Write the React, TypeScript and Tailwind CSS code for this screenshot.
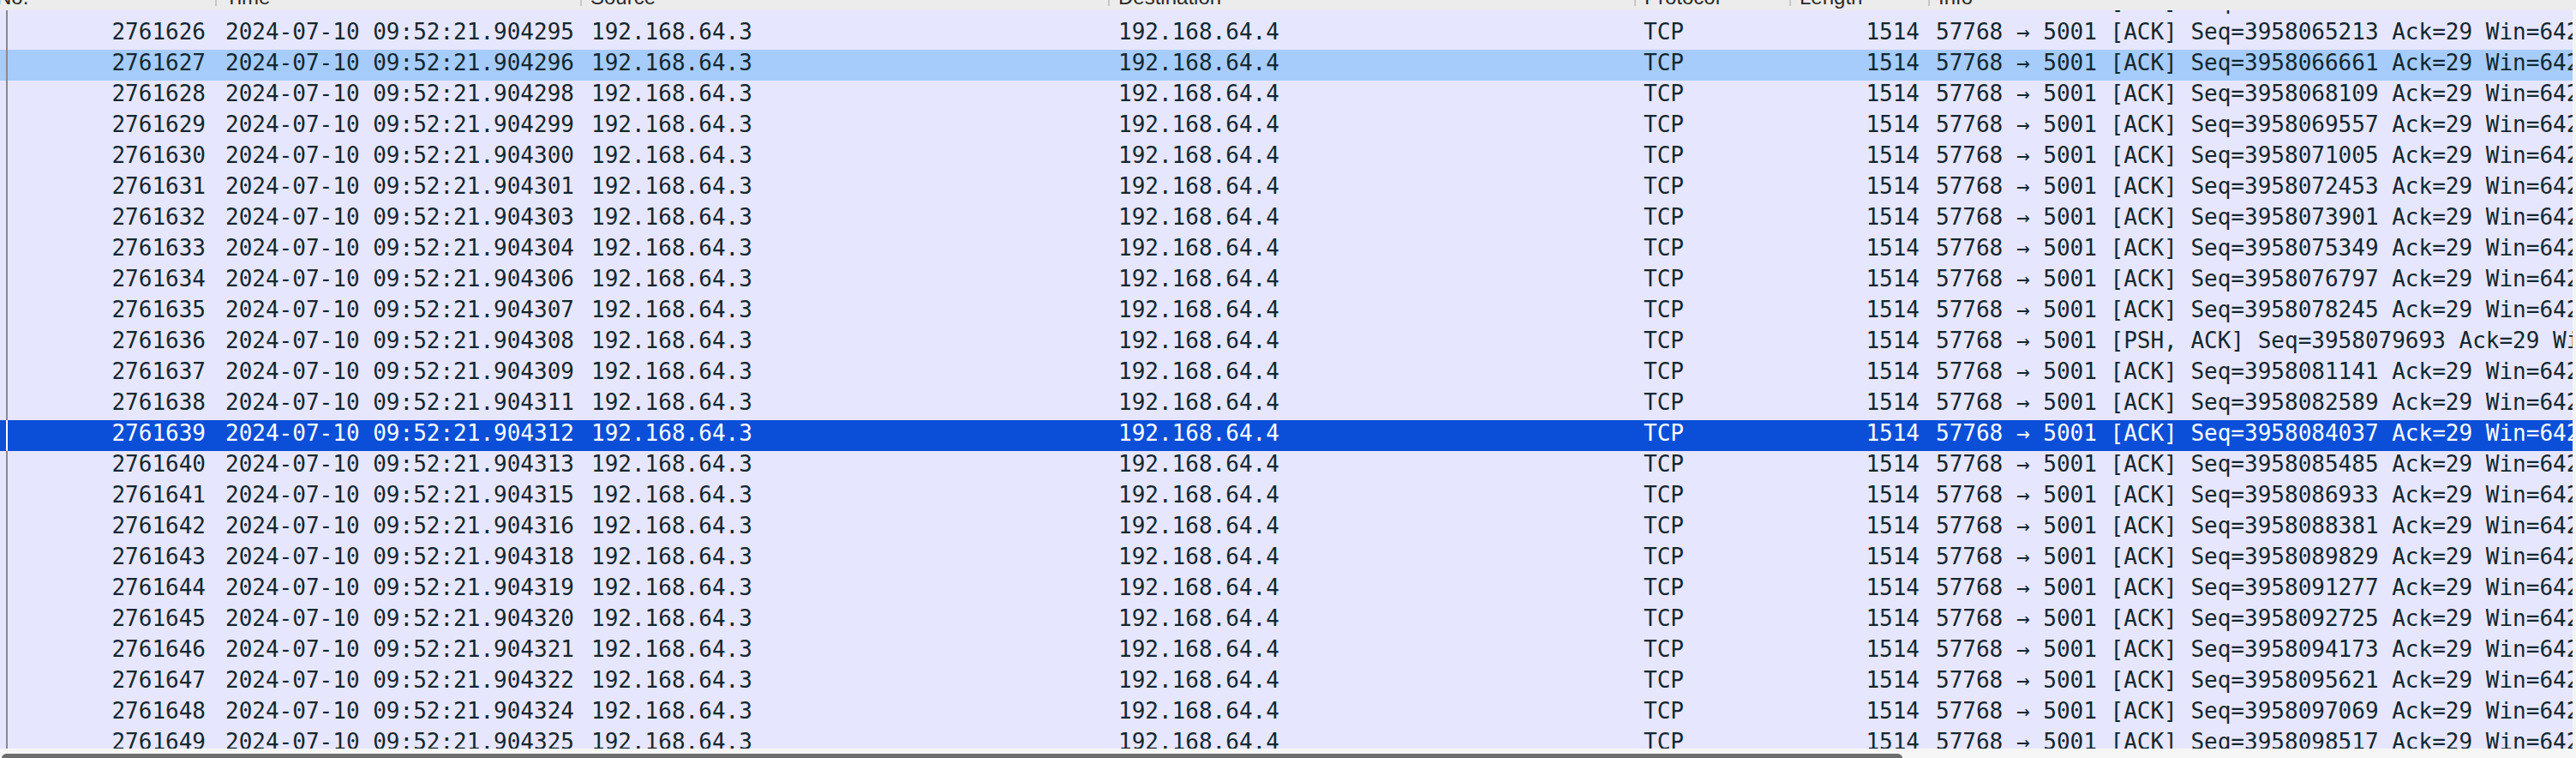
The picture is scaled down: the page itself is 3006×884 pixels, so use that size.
const times: Record<number, string> = {
  2761625: "904294",
  2761626: "904295",
  2761627: "904296",
  2761628: "904298",
  2761629: "904299",
  2761630: "904300",
  2761631: "904301",
  2761632: "904303",
  2761633: "904304",
  2761634: "904306",
  2761635: "904307",
  2761636: "904308",
  2761637: "904309",
  2761638: "904311",
  2761639: "904312",
  2761640: "904313",
  2761641: "904315",
  2761642: "904316",
  2761643: "904318",
  2761644: "904319",
  2761645: "904320",
  2761646: "904321",
  2761647: "904322",
  2761648: "904324",
  2761649: "904325",
}

const packets = Object.keys(times).map((key) => {
  const no = Number(key)
  const seq = 3958065213 + (no - 2761626) * 1448
  const flags = no === 2761636 ? "[PSH, ACK]" : "[ACK]"
  return {
    no,
    time: `2024-07-10 09:52:21.${times[no]}`,
    info: `57768 → 5001 ${flags} Seq=${seq} Ack=29 Win=64256 Len=1448 TSval=2263517081 TSecr=1399226573`,
  }
})

function HeaderCell({ label, width, first }: { label: string; width: string; first?: boolean }) {
  return (
    <div className={`flex shrink-0 ${width}`}>
      {!first && <div className="h-[7px] w-[2px] shrink-0 bg-[#c6c6c6]" />}
      <span className={`mt-[-15px] leading-[24px] whitespace-nowrap ${first ? "ml-[-4px]" : "ml-[10px]"}`}>
        {label}
      </span>
    </div>
  )
}

function Row({ p }: { p: (typeof packets)[number] }) {
  const selected = p.no === 2761639
  const related = p.no === 2761627
  const rowColor = selected
    ? "bg-[#0b4fd8] text-white"
    : related
      ? "bg-[#a6ccfc] text-[#12272e]"
      : "bg-[#e7e6ff] text-[#12272e]"

  return (
    <div className={`flex h-[36px] shrink-0 leading-[30px] whitespace-nowrap ${rowColor}`}>
      {/* No. + related-packet line */}
      <div className="flex w-[251px] shrink-0 pl-[7px]">
        <div className={`w-[2px] shrink-0 ${selected ? "bg-white" : "bg-[#8a8a8e]"}`} />
        <span className="flex-1 pr-[11px] text-right">{p.no}</span>
      </div>
      <div className="w-[426px] shrink-0 overflow-hidden pl-[12px]">{p.time}</div>
      <div className="w-[616px] shrink-0 overflow-hidden pl-[13px]">192.168.64.3</div>
      <div className="w-[614px] shrink-0 overflow-hidden pl-[12px]">192.168.64.4</div>
      <div className="w-[181px] shrink-0 overflow-hidden pl-[11px]">TCP</div>
      <div className="w-[162px] shrink-0 overflow-hidden pr-[10px] text-right">1514</div>
      <div className="w-[752px] shrink-0 overflow-hidden pl-[9px]">{p.info}</div>
    </div>
  )
}

export default function App() {
  return (
    <div className="flex h-[884px] w-[3006px] flex-col overflow-hidden bg-[#e7e6ff]">
      {/* Column header, scrolled so only the bottom of the labels shows */}
      <div className="flex h-[12px] shrink-0 overflow-hidden bg-[#ececec] font-['Liberation_Sans',sans-serif] text-[24px] text-[#2a2a2a]">
        <HeaderCell label="No." width="w-[251px]" first />
        <HeaderCell label="Time" width="w-[426px]" />
        <HeaderCell label="Source" width="w-[616px]" />
        <HeaderCell label="Destination" width="w-[614px]" />
        <HeaderCell label="Protocol" width="w-[181px]" />
        <HeaderCell label="Length" width="w-[162px]" />
        <HeaderCell label="Info" width="w-[752px]" />
      </div>

      {/* Packet list */}
      <div className="flex min-h-0 flex-1">
        <div className="w-[3002px] shrink-0 overflow-hidden">
          <div className="mt-[-26px] flex flex-col font-['DejaVu_Sans_Mono',monospace] text-[26px]">
            {packets.map((p) => (
              <Row key={p.no} p={p} />
            ))}
          </div>
        </div>
        <div className="flex-1 bg-[#f4f4f4]" />
      </div>

      {/* Horizontal scrollbar */}
      <div className="h-[11px] shrink-0 bg-[#f6f6f6] pl-[2px] pt-[6px]">
        <div className="h-[11px] w-[2218px] rounded-full bg-[#6d6d6d]" />
      </div>
    </div>
  )
}
